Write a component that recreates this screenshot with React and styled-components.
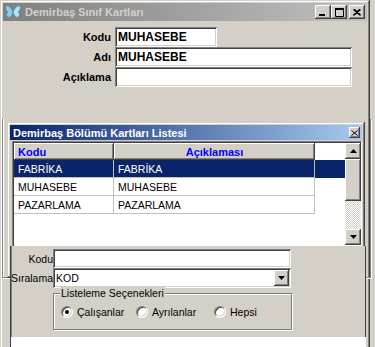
import React from 'react';
import styled, { createGlobalStyle, css } from 'styled-components';

const GlobalStyle = createGlobalStyle`
  html, body {
    margin: 0;
    padding: 0;
    background: #d4d0c8;
  }
  * {
    box-sizing: border-box;
  }
`;

const raised = css`
  background: #d4d0c8;
  box-shadow: inset -1px -1px #404040, inset 1px 1px #ffffff, inset -2px -2px #808080, inset 2px 2px #d4d0c8;
`;

const sunken = css`
  background: #ffffff;
  box-shadow: inset 1px 1px #808080, inset -1px -1px #ffffff, inset 2px 2px #404040, inset -2px -2px #d4d0c8;
`;

const Desktop = styled.div`
  position: relative;
  width: 375px;
  height: 347px;
  overflow: hidden;
  background: #d4d0c8;
  font-family: 'Liberation Sans', Arial, sans-serif;
  color: #000;
`;

const Window = styled.div`
  position: absolute;
  left: ${(p) => p.$left}px;
  top: ${(p) => p.$top}px;
  width: ${(p) => p.$width}px;
  height: ${(p) => p.$height}px;
  padding: 3px;
  display: flex;
  flex-direction: column;
  background: #d4d0c8;
  box-shadow: inset -1px -1px #404040, inset 1px 1px #d4d0c8, inset -2px -2px #808080, inset 2px 2px #ffffff;
`;

const TitleBar = styled.div`
  height: ${(p) => (p.$small ? 15 : 18)}px;
  display: flex;
  align-items: center;
  padding: 0 2px;
  background: ${(p) =>
    p.$active ? 'linear-gradient(to right, #0a246a, #a6caf0)' : 'linear-gradient(to right, #808080, #c0c0c0)'};
  color: ${(p) => (p.$active ? '#ffffff' : '#d4d0c8')};
  font-size: 11px;
  font-weight: bold;
  white-space: nowrap;
`;

const TitleText = styled.span`
  margin-left: ${(p) => p.$indent}px;
  flex: 1;
`;

const CaptionButton = styled.div`
  ${raised};
  width: ${(p) => p.$w}px;
  height: ${(p) => p.$h}px;
  margin-left: ${(p) => p.$gap || 0}px;
  display: flex;
  align-items: center;
  justify-content: center;
`;

const Etched = styled.div`
  position: absolute;
  left: 2px;
  top: 119px;
  width: 369px;
  height: 159px;
  border: 1px solid #808080;
  border-top: none;
  box-shadow: inset 1px 0 #ffffff, 1px 1px #ffffff;
`;

const Form = styled.div`
  display: grid;
  grid-template-columns: 108px 237px;
  grid-auto-rows: 20px;
  column-gap: 4px;
  padding-top: 6px;
`;

const Label = styled.label`
  justify-self: end;
  align-self: center;
  font-size: ${(p) => (p.$bold ? 11 : 10.5)}px;
  font-weight: ${(p) => (p.$bold ? 'bold' : 'normal')};
`;

const Field = styled.div`
  ${sunken};
  width: ${(p) => (p.$w ? `${p.$w}px` : '100%')};
  height: ${(p) => p.$h || 20}px;
  display: flex;
  align-items: center;
  padding: 0 3px;
  font-size: ${(p) => (p.$bold ? 12 : 10.5)}px;
  font-weight: ${(p) => (p.$bold ? 'bold' : 'normal')};
`;

const FieldText = styled.span`
  flex: 1;
`;

const GridBox = styled.div`
  margin: 1px 0 0 2px;
  height: 106px;
  display: flex;
  border-style: solid;
  border-width: 1px;
  border-color: #808080 #ffffff #ffffff #808080;
  box-shadow: inset 1px 1px #404040;
  padding: 1px 0 0 1px;
  background: #ffffff;
`;

const Table = styled.div`
  flex: 1;
  background: #ffffff;
`;

const Row = styled.div`
  display: grid;
  grid-template-columns: 100px 201px;
  height: ${(p) => (p.$head ? 17 : 18)}px;
  background: ${(p) => (p.$selected ? '#0a246a' : 'transparent')};
  color: ${(p) => (p.$selected ? '#ffffff' : '#000000')};
`;

const HeadCell = styled.div`
  ${raised};
  display: flex;
  align-items: center;
  justify-content: ${(p) => (p.$center ? 'center' : 'flex-start')};
  padding: 0 4px;
  color: #0000ff;
  font-size: 11px;
  font-weight: bold;
`;

const Cell = styled.div`
  display: flex;
  align-items: center;
  padding: 0 4px;
  font-size: 10.5px;
  border-right: 1px solid #c0c0c0;
  border-bottom: 1px solid #c0c0c0;
`;

const ScrollBar = styled.div`
  width: 16px;
  height: 102px;
  display: flex;
  flex-direction: column;
`;

const ScrollButton = styled.div`
  ${raised};
  height: ${(p) => p.$h}px;
  flex-shrink: 0;
  display: flex;
  align-items: center;
  justify-content: center;
`;

const Track = styled.div`
  flex: 1;
  background-color: #ffffff;
  background-image: repeating-conic-gradient(#d4d0c8 0% 25%, #ffffff 0% 50%);
  background-size: 2px 2px;
`;

const Panel = styled.div`
  position: absolute;
  left: 10px;
  top: 246px;
  width: 356px;
  height: 101px;
  display: flex;
  flex-direction: column;
  background: #d4d0c8;
  box-shadow: inset 1px 0 #404040, inset 2px 0 #808080, inset -1px 0 #404040;
`;

const FilterGrid = styled.div`
  display: grid;
  grid-template-columns: 42px 238px;
  padding: 3px 0 0 1px;
`;

const DropButton = styled.div`
  ${raised};
  width: 15px;
  height: 16px;
  margin-right: -1px;
  display: flex;
  align-items: center;
  justify-content: center;
`;

const GroupBox = styled.div`
  position: relative;
  margin: 5px 0 0 43px;
  width: 239px;
  height: 37px;
  padding: 1px 7px 0;
  border: 1px solid #808080;
  box-shadow: inset 1px 1px #ffffff, 1px 1px #ffffff;
  display: flex;
  align-items: center;
  font-size: 10.5px;
`;

const Legend = styled.span`
  position: absolute;
  left: 6px;
  top: -7px;
  padding: 0 1px;
  background: #d4d0c8;
  font-size: 10.5px;
  line-height: 12px;
`;

const Option = styled.div`
  width: ${(p) => (p.$w ? `${p.$w}px` : 'auto')};
  display: flex;
  align-items: center;
  gap: 4px;
`;

const Radio = styled.span`
  position: relative;
  width: 12px;
  height: 12px;
  border-radius: 50%;
  background: #ffffff;
  border: 1px solid;
  border-color: #808080 #ffffff #ffffff #808080;
  box-shadow: inset 1px 1px #404040, inset -1px -1px #d4d0c8;

  &::after {
    content: '';
    display: ${(p) => (p.$checked ? 'block' : 'none')};
    position: absolute;
    left: 3px;
    top: 3px;
    width: 4px;
    height: 4px;
    border-radius: 50%;
    background: #000000;
  }
`;

const Footer = styled.div`
  margin-top: auto;
  height: 10px;
  background: #ffffff;
  margin-left: 1px;
`;

const Arrow = ({ down }) => (
  <svg width="7" height="4" viewBox="0 0 7 4">
    <path d={down ? 'M0 0H7L3.5 4Z' : 'M0 4H7L3.5 0Z'} fill="#000" />
  </svg>
);

const Butterfly = () => (
  <svg width="16" height="16" viewBox="0 0 16 16">
    <path d="M8 8C6 3 3 1 1 2c-1 2 0 5 2 6-2 1-2 4 0 5 2 1 4-1 5-5Z" fill="#8fd0e6" stroke="#3f93b5" strokeWidth="0.8" />
    <path d="M8 8c2-5 5-7 7-6 1 2 0 5-2 6 2 1 2 4 0 5-2 1-4-1-5-5Z" fill="#b7e3f0" stroke="#3f93b5" strokeWidth="0.8" />
  </svg>
);

const rows = [
  { kod: 'FABRİKA', aciklama: 'FABRİKA' },
  { kod: 'MUHASEBE', aciklama: 'MUHASEBE' },
  { kod: 'PAZARLAMA', aciklama: 'PAZARLAMA' },
];

const App = () => {
  return (
    <Desktop>
      <GlobalStyle />
      <Window $left={0} $top={0} $width={370} $height={360}>
        <TitleBar>
          <Butterfly />
          <TitleText $indent={4}>Demirbaş Sınıf Kartları</TitleText>
          <CaptionButton $w={16} $h={14}>
            <svg width="8" height="7" viewBox="0 0 8 7">
              <rect x="0" y="5" width="6" height="2" fill="#000" />
            </svg>
          </CaptionButton>
          <CaptionButton $w={16} $h={14}>
            <svg width="9" height="9" viewBox="0 0 9 9">
              <path d="M0.5 1.5H8.5V8.5H0.5Z" fill="none" stroke="#000" />
              <rect x="0" y="0" width="9" height="2" fill="#000" />
            </svg>
          </CaptionButton>
          <CaptionButton $w={16} $h={14} $gap={2}>
            <svg width="8" height="7" viewBox="0 0 8 7">
              <path d="M0.5 0.5L7.5 6.5M7.5 0.5L0.5 6.5M1.5 0.5L7.5 6M6.5 0.5L0.5 6" stroke="#000" strokeWidth="1.2" />
            </svg>
          </CaptionButton>
        </TitleBar>
        <Form>
          <Label $bold>Kodu</Label>
          <Field $bold $w={102}>MUHASEBE</Field>
          <Label $bold>Adı</Label>
          <Field $bold>MUHASEBE</Field>
          <Label $bold>Açıklama</Label>
          <Field $bold />
        </Form>
      </Window>

      <Etched />

      <Window $left={7} $top={122} $width={358} $height={156}>
        <TitleBar $active $small>
          <TitleText $indent={1}>Demirbaş Bölümü Kartları Listesi</TitleText>
          <CaptionButton $w={11} $h={11}>
            <svg width="7" height="6" viewBox="0 0 7 6">
              <path d="M0.5 0.5L6.5 5.5M6.5 0.5L0.5 5.5" stroke="#000" />
            </svg>
          </CaptionButton>
        </TitleBar>
        <GridBox>
          <Table>
            <Row $head>
              <HeadCell>Kodu</HeadCell>
              <HeadCell $center>Açıklaması</HeadCell>
            </Row>
            {rows.map((r, i) => (
              <Row key={r.kod} $selected={i === 0}>
                <Cell>{r.kod}</Cell>
                <Cell>{r.aciklama}</Cell>
              </Row>
            ))}
          </Table>
          <ScrollBar>
            <ScrollButton $h={16}>
              <Arrow />
            </ScrollButton>
            <ScrollButton $h={42} />
            <Track />
            <ScrollButton $h={16}>
              <Arrow down />
            </ScrollButton>
          </ScrollBar>
        </GridBox>
      </Window>

      <Panel>
        <FilterGrid>
          <Label>Kodu</Label>
          <Field $h={19} />
          <Label>Sıralama</Label>
          <Field $h={20}>
            <FieldText>KOD</FieldText>
            <DropButton>
              <Arrow down />
            </DropButton>
          </Field>
        </FilterGrid>
        <GroupBox>
          <Legend>Listeleme Seçenekleri</Legend>
          <Option $w={75}>
            <Radio $checked />
            Çalışanlar
          </Option>
          <Option $w={78}>
            <Radio />
            Ayrılanlar
          </Option>
          <Option>
            <Radio />
            Hepsi
          </Option>
        </GroupBox>
        <Footer />
      </Panel>
    </Desktop>
  );
};

export default App;
